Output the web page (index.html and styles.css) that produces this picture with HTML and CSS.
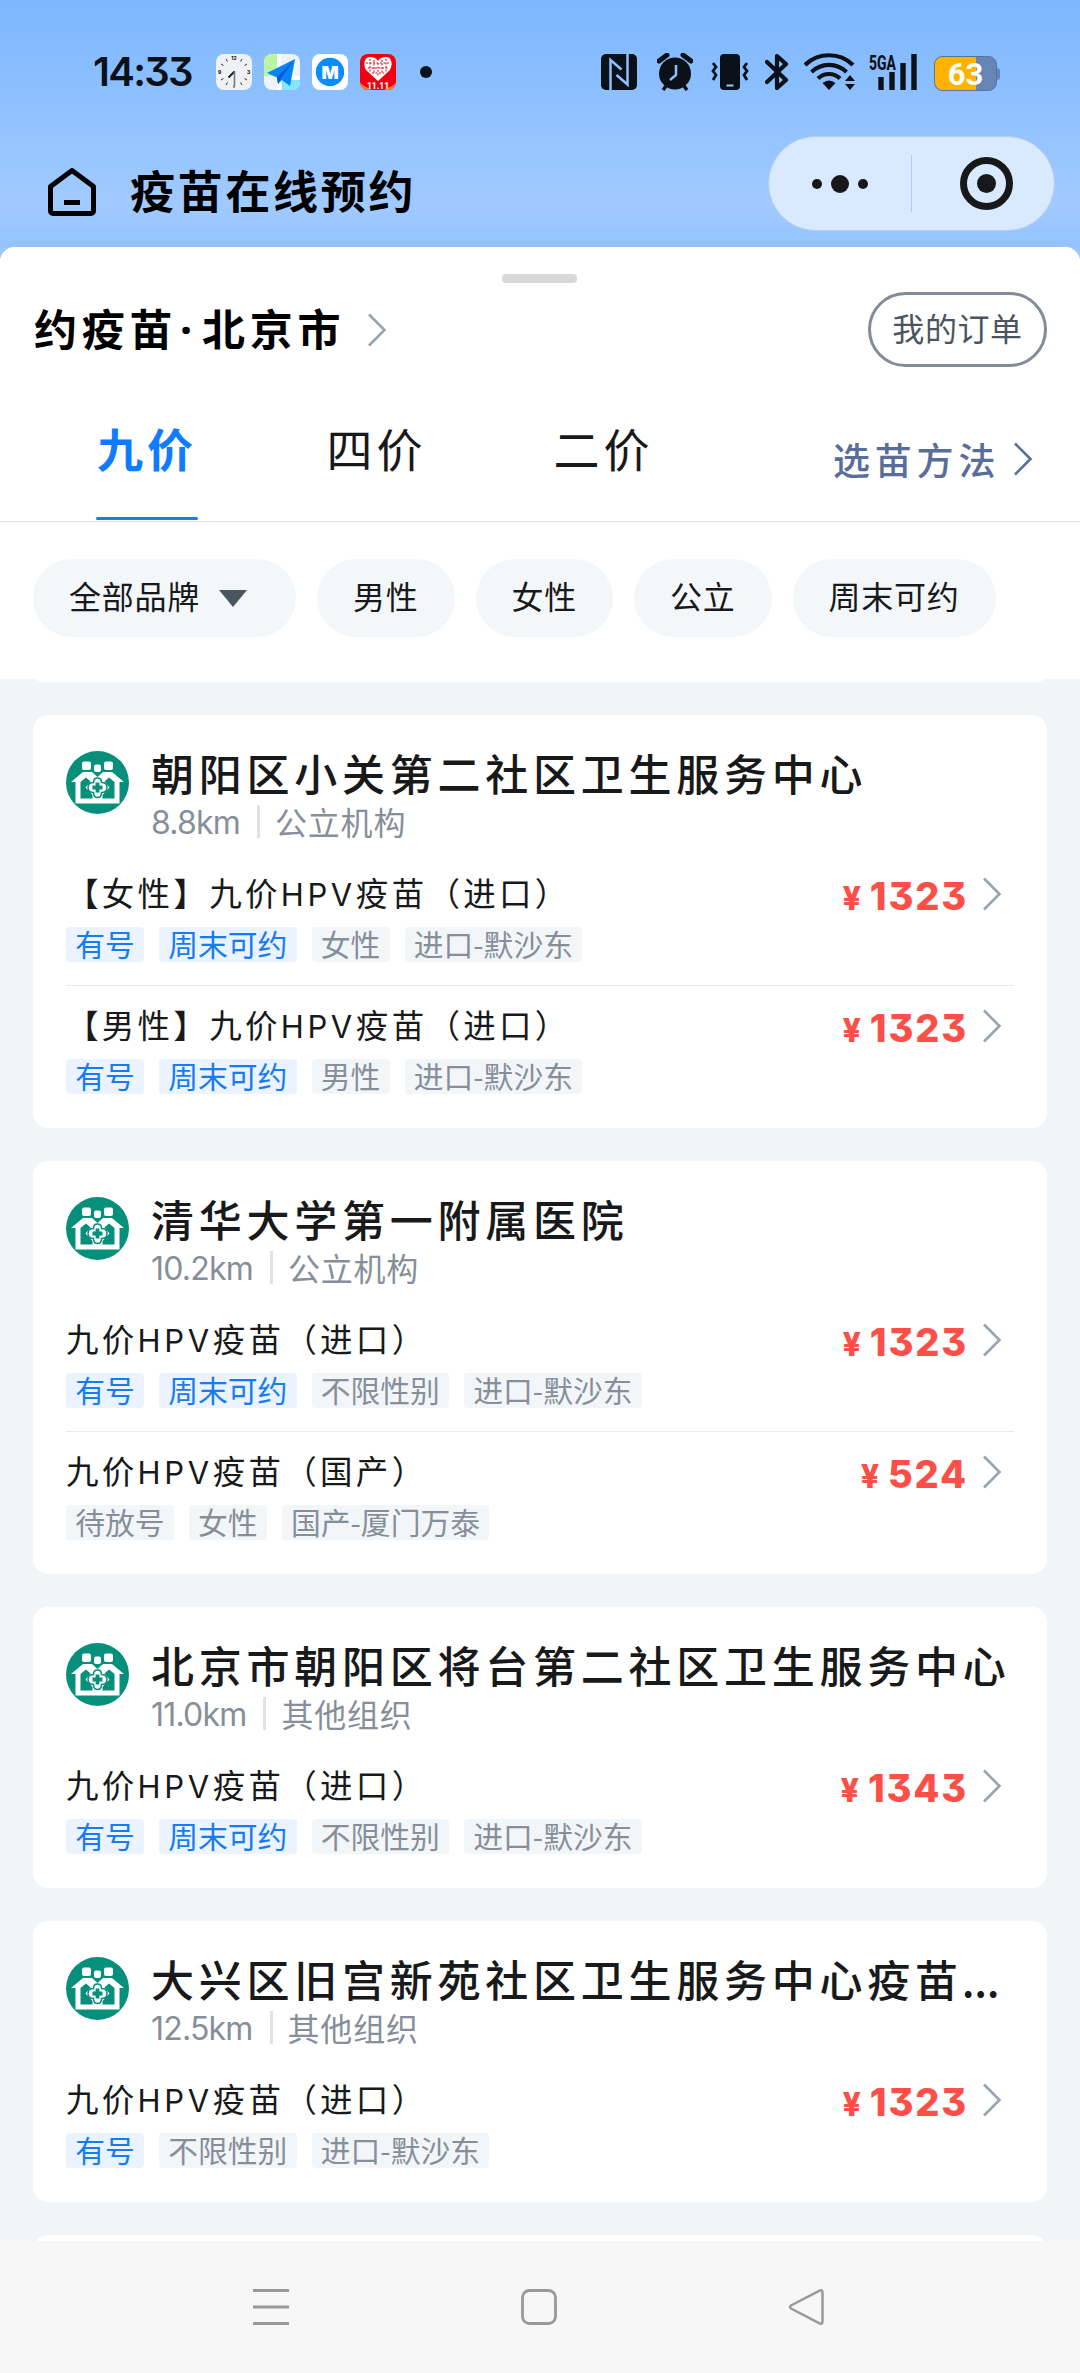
FILE: index.html
```html
<!DOCTYPE html>
<html lang="zh-CN">
<head>
    <meta charset="UTF-8">
    <meta name="viewport" content="width=device-width, initial-scale=1.0">
    <title>疫苗在线预约</title>
    <link rel="stylesheet" href="styles.css">
</head>
<body>
    <!-- Shared icons -->
    <svg width="0" height="0" class="sprite">
        <symbol id="logo" viewBox="0 0 63 63">
            <circle cx="31.5" cy="31.5" r="31.5" fill="#068f7b"/>
            <g fill="#fff">
                <rect x="16" y="10.500" width="9" height="8.500" rx="2"/>
                <rect x="28" y="13.500" width="7" height="7.500" rx="2"/>
                <rect x="38" y="10.500" width="9" height="8.500" rx="2"/>
                <path d="M5 31L17 21h9l5.500 5 5.500-5h9L58 31h-4.500v21.500h-44V31z"/>
            </g>
            <path d="M14.500 47.500V31l5.500-4.500 4.500 4-5 6 7 7.500v3.500zM48.500 47.500V31L43 26.500l-4.500 4 5 6-7 7.500v3.500z" fill="#068f7b"/>
            <path d="M31.500 27c3 0 4 2 4 4.500 3 0 5.500 1.500 5.500 5s-2.500 5-5.500 5c0 3-1 5-4 5s-4-2-4-5c-3 0-5.500-1.500-5.500-5s2.500-5 5.500-5c0-2.500 1-4.500 4-4.500z" fill="#fff" stroke="#068f7b" stroke-width="1.500"/>
            <path d="M31.500 31.500v10M26.500 36.500h10" stroke="#068f7b" stroke-width="3.800"/>
        </symbol>
        <symbol id="arrow" viewBox="0 0 20 34">
            <path d="M2 1.500L17.500 17 2 32.500" fill="none" stroke="currentColor" stroke-width="2.600"/>
        </symbol>
    </svg>

    <header class="top">
        <div class="status-bar">
            <span class="time">14:33</span>
            <div class="app-icons">
                <svg viewBox="0 0 36 36">
                    <rect width="36" height="36" rx="8" fill="#eff1f4"/>
                    <g stroke="#333" stroke-width="1"><path d="M26 5l-1.500 2.500M31 10l-2.500 1.500M31 26l-2.500-1.500M26 31l-1.500-2.500M10 31l1.500-2.500M5 26l2.500-1.500M5 10l2.500 1.500M10 5l1.500 2.500M18 31v3"/></g>
                    <path d="M18.500 17.500L12.500 23.500" stroke="#222" stroke-width="2"/>
                    <path d="M18.500 17v15" stroke="#67748c" stroke-width="1.500"/>
                    <text x="18" y="6" class="dial">12</text><text x="32.500" y="20" class="dial">3</text><text x="3.500" y="20" class="dial">9</text>
                </svg>
                <svg viewBox="0 0 36 36">
                    <rect width="36" height="36" rx="8" fill="#ecf4f5"/>
                    <path d="M8 0h5v22H0V8a8 8 0 0 1 8-8z" fill="#bdf4a4"/>
                    <path d="M18 26h18v2a8 8 0 0 1-8 8H18z" fill="#83e6ff"/>
                    <path d="M13 0h4v36h-4zM17 22h19v4H17z" fill="#fff"/>
                    <path d="M31 5L3 19l10 4.500 1 6.500 4-4 8 6z" fill="#0a83f7"/>
                    <path d="M31 5L13 23.500l1 6.500 3-6z" fill="#0757d8"/>
                </svg>
                <svg viewBox="0 0 36 36">
                    <rect width="36" height="36" rx="8" fill="#fff"/>
                    <circle cx="18" cy="18" r="14.200" fill="#0a8cfb"/>
                    <text x="18" y="24.500" class="app-m">M</text>
                </svg>
                <svg viewBox="0 0 36 36">
                    <rect width="36" height="36" rx="8" fill="#f20012"/>
                    <path d="M0 28c3 5 8 5 12 8H8a8 8 0 0 1-8-8zM36 28c-3 5-8 5-12 8h4a8 8 0 0 0 8-8z" fill="#ff7a30"/>
                    <path d="M18 27L6 16C3 11 4 3 10 3c4 0 6 1 8 4 2-3 4-4 8-4 6 0 7 8 4 13z" fill="#fff"/>
                    <path d="M6 9h24M8 14h20M12 19h12M10 5v13M14 6v14M18 9v14M22 6v14M26 5v13" stroke="#f20012" stroke-width="1" stroke-dasharray="2 1.500"/>
                    <text x="18" y="34.500" class="sale">11.11</text>
                </svg>
            </div>
            <span class="more-dot"></span>
            <div class="sys-icons">
                <svg class="nfc" width="36" height="36" viewBox="0 0 36 36">
                    <rect width="36" height="36" rx="5" fill="#0b1118"/>
                    <path d="M9.500 36V6l11 9.500M26.500 0v30.500l-11-9.500" fill="none" stroke="#8fc0ff" stroke-width="2.500"/>
                </svg>
                <svg class="alarm" width="36" height="38" viewBox="0 0 36 38">
                    <circle cx="18" cy="20.500" r="16" fill="#0b1118"/>
                    <path d="M2 8l8-6M34 8l-8-6" stroke="#0b1118" stroke-width="5" stroke-linecap="round"/>
                    <path d="M9 33l-3 4M27 33l3 4" stroke="#0b1118" stroke-width="3.500"/>
                    <path d="M19 12v10l-6 5" fill="none" stroke="#8dbfff" stroke-width="2.500"/>
                </svg>
                <svg class="vibrate" width="38" height="36" viewBox="0 0 38 36">
                    <rect x="9" width="20" height="36" rx="4" fill="#0b1118"/>
                    <path d="M15.500 31.500h7" stroke="#9cc6ff" stroke-width="2"/>
                    <path d="M2 9l3 4-3 4 3 4-3 5M36 9l-3 4 3 4-3 4 3 5" fill="none" stroke="#0b1118" stroke-width="2.800"/>
                </svg>
                <svg class="bluetooth" width="24" height="38" viewBox="0 0 24 38">
                    <path d="M2 9l19 18-9 8V3l9 8L2 29" fill="none" stroke="#0b1118" stroke-width="4.200" stroke-linejoin="round" stroke-linecap="round"/>
                </svg>
                <svg class="wifi" width="52" height="38" viewBox="0 0 52 38">
                    <g fill="none" stroke="#0b1118" stroke-width="4.200">
                        <path d="M1 12c13-13 35-13 48 0"/>
                        <path d="M7.500 19c10-9.500 25-9.500 35 0"/>
                        <path d="M14 25.500c6-6 16-6 22 0"/>
                    </g>
                    <path d="M18.500 30q6.500-5 13 0L25 37zM41 28l5-6 5 6zM41 31l5 6 5-6z" fill="#0b1118"/>
                </svg>
                <svg class="signal" width="48" height="38" viewBox="0 0 48 38">
                    <text x="0" y="16.500" textLength="27" lengthAdjust="spacingAndGlyphs" class="net">5GA</text>
                    <path d="M12 37V24M23 37V19M34 37V10M45 37V1" stroke="#0b1118" stroke-width="5.400"/>
                </svg>
                <svg class="battery" width="67" height="35" viewBox="0 0 67 35">
                    <rect x=".5" y=".5" width="62" height="34" rx="8" fill="#6585b5" stroke="#54759f"/>
                    <path d="M63 12q3 0 3 3v6q0 3-3 3z" fill="#6585b5"/>
                    <path d="M8.500 1H42v33H8.500A7.500 7.500 0 0 1 1 26.500v-18A7.500 7.500 0 0 1 8.500 1z" fill="#ffb300"/>
                    <text x="31.500" y="28.500" class="level">63</text>
                </svg>
            </div>
        </div>
        <div class="nav-bar">
            <svg class="home" viewBox="0 0 48 48">
                <path d="M2.500 18.500L24 2.500l21.500 16V43a2.500 2.500 0 0 1-2.500 2.500H5A2.500 2.500 0 0 1 2.500 43z" fill="none" stroke="#000" stroke-width="5" stroke-linejoin="round"/>
                <path d="M16 34.500h16" stroke="#000" stroke-width="5"/>
            </svg>
            <h1 class="nav-title">疫苗在线预约</h1>
            <div class="capsule">
                <div class="dots"><i></i><i class="big"></i><i></i></div>
                <span class="capsule-line"></span>
                <div class="target"><i></i></div>
            </div>
        </div>
    </header>

    <main class="sheet">
        <section class="panel">
            <div class="handle"></div>
            <div class="city-row">
                <h2 class="city">约疫苗<span class="mid-dot">·</span>北京市</h2>
                <svg class="arrow city-arrow"><use href="#arrow"/></svg>
                <button class="orders">我的订单</button>
            </div>
            <nav class="tabs">
                <a class="tab active">九价</a>
                <a class="tab">四价</a>
                <a class="tab">二价</a>
                <a class="guide">选苗方法<svg class="arrow"><use href="#arrow"/></svg></a>
            </nav>
            <div class="filters">
                <span class="chip">全部品牌<i class="caret"></i></span>
                <span class="chip">男性</span>
                <span class="chip">女性</span>
                <span class="chip">公立</span>
                <span class="chip">周末可约</span>
            </div>
        </section>

        <section class="list">
            <div class="card card-prev"></div>

            <article class="card">
                <div class="card-head">
                    <svg class="logo"><use href="#logo"/></svg>
                    <div>
                        <h3 class="name">朝阳区小关第二社区卫生服务中心</h3>
                        <p class="meta"><span>8.8km</span><i></i>公立机构</p>
                    </div>
                </div>
                <div class="item">
                    <div class="item-row">
                        <span class="vaccine">【女性】九价<b>HPV</b>疫苗（进口）</span>
                        <span class="price"><small>¥</small>1323</span>
                        <svg class="arrow"><use href="#arrow"/></svg>
                    </div>
                    <div class="tags"><span class="tag blue">有号</span><span class="tag blue">周末可约</span><span class="tag">女性</span><span class="tag">进口-默沙东</span></div>
                </div>
                <div class="item">
                    <div class="item-row">
                        <span class="vaccine">【男性】九价<b>HPV</b>疫苗（进口）</span>
                        <span class="price"><small>¥</small>1323</span>
                        <svg class="arrow"><use href="#arrow"/></svg>
                    </div>
                    <div class="tags"><span class="tag blue">有号</span><span class="tag blue">周末可约</span><span class="tag">男性</span><span class="tag">进口-默沙东</span></div>
                </div>
            </article>

            <article class="card">
                <div class="card-head">
                    <svg class="logo"><use href="#logo"/></svg>
                    <div>
                        <h3 class="name">清华大学第一附属医院</h3>
                        <p class="meta"><span>10.2km</span><i></i>公立机构</p>
                    </div>
                </div>
                <div class="item">
                    <div class="item-row">
                        <span class="vaccine">九价<b>HPV</b>疫苗（进口）</span>
                        <span class="price"><small>¥</small>1323</span>
                        <svg class="arrow"><use href="#arrow"/></svg>
                    </div>
                    <div class="tags"><span class="tag blue">有号</span><span class="tag blue">周末可约</span><span class="tag">不限性别</span><span class="tag">进口-默沙东</span></div>
                </div>
                <div class="item">
                    <div class="item-row">
                        <span class="vaccine">九价<b>HPV</b>疫苗（国产）</span>
                        <span class="price"><small>¥</small>524</span>
                        <svg class="arrow"><use href="#arrow"/></svg>
                    </div>
                    <div class="tags"><span class="tag">待放号</span><span class="tag">女性</span><span class="tag">国产-厦门万泰</span></div>
                </div>
            </article>

            <article class="card">
                <div class="card-head">
                    <svg class="logo"><use href="#logo"/></svg>
                    <div>
                        <h3 class="name">北京市朝阳区将台第二社区卫生服务中心</h3>
                        <p class="meta"><span>11.0km</span><i></i>其他组织</p>
                    </div>
                </div>
                <div class="item">
                    <div class="item-row">
                        <span class="vaccine">九价<b>HPV</b>疫苗（进口）</span>
                        <span class="price"><small>¥</small>1343</span>
                        <svg class="arrow"><use href="#arrow"/></svg>
                    </div>
                    <div class="tags"><span class="tag blue">有号</span><span class="tag blue">周末可约</span><span class="tag">不限性别</span><span class="tag">进口-默沙东</span></div>
                </div>
            </article>

            <article class="card">
                <div class="card-head">
                    <svg class="logo"><use href="#logo"/></svg>
                    <div>
                        <h3 class="name">大兴区旧宫新苑社区卫生服务中心疫苗<span class="ellipsis">...</span></h3>
                        <p class="meta"><span>12.5km</span><i></i>其他组织</p>
                    </div>
                </div>
                <div class="item">
                    <div class="item-row">
                        <span class="vaccine">九价<b>HPV</b>疫苗（进口）</span>
                        <span class="price"><small>¥</small>1323</span>
                        <svg class="arrow"><use href="#arrow"/></svg>
                    </div>
                    <div class="tags"><span class="tag blue">有号</span><span class="tag">不限性别</span><span class="tag">进口-默沙东</span></div>
                </div>
            </article>

            <article class="card card-next"></article>
        </section>
    </main>

    <footer class="sys-nav">
        <svg viewBox="0 0 36 36"><path d="M0 1.500h36M0 18h36M0 34.500h36" stroke="#999" stroke-width="3"/></svg>
        <svg viewBox="0 0 36 36"><rect x="1.500" y="1.500" width="33" height="33" rx="7" fill="none" stroke="#999" stroke-width="2.800"/></svg>
        <svg viewBox="0 0 36 36"><path d="M32 1.500q2.500-1 2.500 2v29q0 3-2.500 2L3 19.500q-2-1.500 0-3z" fill="none" stroke="#999" stroke-width="2.500"/></svg>
    </footer>
</body>
</html>
```

FILE: styles.css
```css
* {
    box-sizing: border-box;
}

body {
    margin: 0;
    width: 1080px;
    height: 2373px;
    overflow: hidden;
    display: flex;
    flex-direction: column;
    font-family: "Noto Sans CJK SC", sans-serif;
    color: #17191b;
    background-color: #f1f5f8;
}

h1, h2, h3, p {
    margin: 0;
}

svg {
    display: block;
    flex: none;
}

.sprite {
    position: absolute;
}

/* --- Blue header --- */
.top {
    height: 272px;
    flex: none;
    margin-bottom: -25px;
    background: linear-gradient(#80b8ff 0, #81b9ff 25px, #a1caff 205px, #95c2ff 246px, #a8ceff 260px);
}

.status-bar {
    height: 144px;
    padding: 0 79px 0 93px;
    display: flex;
    align-items: center;
}

.time {
    width: 123px;
    font: 600 40px/40px Inter, sans-serif;
    font-feature-settings: "cv09";
    letter-spacing: -1.7px;
    color: #0b1118;
}

.app-icons {
    display: flex;
    gap: 12px;
}

.app-icons svg {
    width: 36px;
    height: 36px;
}

.dial {
    font: 700 5px Inter, sans-serif;
    text-anchor: middle;
}

.app-m {
    font: 900 18px Inter, sans-serif;
    text-anchor: middle;
    fill: #fff;
}

.sale {
    font: 800 8.5px Roboto, sans-serif;
    text-anchor: middle;
    fill: #fff;
}

.more-dot {
    width: 12px;
    height: 12px;
    margin-left: 24px;
    border-radius: 50%;
    background: #0b1118;
}

.sys-icons {
    margin-left: auto;
    display: flex;
    align-items: center;
}

.alarm {
    margin-left: 20px;
}

.vibrate {
    margin-left: 18px;
}

.bluetooth {
    margin-left: 16px;
}

.wifi {
    margin-left: 15px;
}

.signal {
    margin-left: 13px;
    overflow: visible;
}

.battery {
    margin: 2px 0 0 17px;
}

.net {
    font: 800 21px Roboto, sans-serif;
    fill: #0b1118;
}

.level {
    font: 700 31px Roboto, sans-serif;
    text-anchor: middle;
    fill: #fff;
}

.nav-bar {
    height: 103px;
    padding: 0 25px 7px 48px;
    display: flex;
    align-items: center;
}

.home {
    width: 48px;
    height: 48px;
}

.nav-title {
    margin: -5px 0 0 34px;
    font-size: 45px;
    line-height: 60px;
    letter-spacing: 2.7px;
    color: #000;
}

.capsule {
    width: 287px;
    height: 95px;
    margin: -17px 0 0 auto;
    display: flex;
    align-items: center;
    border-radius: 48px;
    border: 1px solid #b3cdec;
    background: #d9e9ff;
}

.dots {
    width: 142px;
    display: flex;
    align-items: center;
    justify-content: center;
    gap: 9px;
}

.dots i {
    width: 10px;
    height: 10px;
    border-radius: 50%;
    background: #16181a;
}

.dots .big {
    width: 18px;
    height: 18px;
}

.capsule-line {
    width: 1px;
    height: 57px;
    background: #b9cbe2;
}

.target {
    width: 53px;
    height: 53px;
    margin-left: 48px;
    border: 7px solid #16181a;
    border-radius: 50%;
    display: flex;
    align-items: center;
    justify-content: center;
}

.target i {
    width: 19px;
    height: 19px;
    border-radius: 50%;
    background: #16181a;
}

/* --- Filter panel --- */
.sheet {
    flex: 1;
    min-height: 0;
    overflow: hidden;
    border-radius: 15px 15px 0 0;
    background: #f1f5f8;
}

.panel {
    height: 432px;
    padding-top: 27px;
    background: #fff;
}

.handle {
    width: 75px;
    height: 9px;
    margin-left: 502px;
    border-radius: 4px;
    background: #d8d8d8;
}

.city-row {
    height: 93px;
    padding: 0 33px 0 34px;
    display: flex;
    align-items: center;
}

.city {
    margin-top: -3px;
    font-size: 43px;
    line-height: 60px;
    letter-spacing: 4.7px;
    color: #000;
}

.mid-dot {
    display: inline-block;
    width: 25px;
    text-indent: 3px;
    letter-spacing: 0;
    font-family: "Noto Sans", sans-serif;
}

.arrow {
    width: 20px;
    height: 34px;
    color: #98a4b1;
}

.city-arrow {
    margin-left: 22px;
}

.orders {
    width: 179px;
    height: 75px;
    margin-left: auto;
    padding: 0 0 6px;
    border: 3px solid #828c96;
    border-radius: 38px;
    background: none;
    font: 400 32px "Noto Sans CJK SC", sans-serif;
    letter-spacing: .6px;
    color: #4b5560;
}

.tabs {
    height: 146px;
    padding-left: 33px;
    display: flex;
    border-bottom: 1px solid #dae3ea;
}

.tab {
    width: 227px;
    padding: 41px 0 0 6px;
    font-size: 46px;
    line-height: 60px;
    letter-spacing: 4px;
    text-align: center;
}

.tab.active {
    padding-left: 1px;
    font-weight: 700;
    color: #0f7bff;
}

.tab.active::after {
    content: "";
    display: block;
    width: 102px;
    height: 3px;
    margin: 40px 0 0 62px;
    border-radius: 2px;
    background: #1f7ce0;
}

.guide {
    height: 60px;
    margin: 53px 0 0 119px;
    display: flex;
    align-items: center;
    font-size: 37px;
    font-weight: 500;
    line-height: 60px;
    letter-spacing: 4.8px;
    color: #586d98;
}

.guide .arrow {
    margin-left: 13px;
    color: #586d98;
}

.filters {
    padding: 37px 33px 0;
    display: flex;
    gap: 21px;
}

.chip {
    height: 78px;
    padding: 0 36px 6px;
    display: flex;
    align-items: center;
    border-radius: 39px;
    background: #f3f7fa;
    font-size: 32px;
    line-height: 70px;
    letter-spacing: .75px;
}

.caret {
    margin: 6px 13px 0 19px;
    border: 14px solid transparent;
    border-top: 17px solid #4b5560;
    border-bottom: 0;
}

/* --- Clinic list --- */
.list {
    padding: 0 33px;
    display: flex;
    flex-direction: column;
    gap: 33px;
}

.card {
    padding: 36px 33px 33px;
    border-radius: 15px;
    background: #fff;
}

.card-prev {
    height: 18px;
    padding: 0;
    margin-top: -15px;
}

.card-next {
    height: 60px;
}

.card-head {
    height: 98px;
    display: flex;
    gap: 22px;
}

.logo {
    width: 63px;
    height: 63px;
}

.name {
    height: 47px;
    font-size: 43px;
    font-weight: 500;
    line-height: 43px;
    letter-spacing: 4.75px;
    white-space: nowrap;
}

.ellipsis {
    margin-left: -1px;
    letter-spacing: -.3px;
}

.meta {
    height: 46px;
    display: flex;
    align-items: center;
    font-size: 32px;
    line-height: 44px;
    letter-spacing: .8px;
    color: #868f99;
}

.meta span {
    margin-top: 3px;
    font-family: Inter, sans-serif;
    letter-spacing: -.8px;
}

.meta i {
    width: 3px;
    height: 33px;
    margin: 0 15px 0 17px;
    background: #dfe3e8;
}

.item {
    height: 114px;
    padding-top: 22px;
}

.item:not(:last-child) {
    height: 137px;
    border-bottom: 1px solid #e6ebef;
}

.item + .item {
    height: 109px;
    padding-top: 17px;
}

.item-row {
    height: 46px;
    display: flex;
    align-items: center;
}

.vaccine {
    margin-top: -1px;
    font-size: 32.5px;
    line-height: 46px;
    letter-spacing: 3.3px;
    white-space: nowrap;
}

.vaccine b {
    font-family: Inter, sans-serif;
    font-size: 31px;
    font-weight: 400;
    letter-spacing: 3.6px;
}

.price {
    margin: 6px 0 0 auto;
    font: 800 38px/46px Inter, sans-serif;
    font-feature-settings: "cv09";
    letter-spacing: 1.8px;
    color: #fc4f48;
}

.price small {
    margin-right: 7px;
    font-size: 32px;
}

.item-row .arrow {
    margin: 0 12px 0 14px;
}

.tags {
    margin-top: 10px;
    display: flex;
    gap: 15px;
}

.tag {
    height: 35px;
    padding: 0 9.2px;
    border-radius: 4px;
    background: #f3f6f9;
    font-size: 29.8px;
    line-height: 32px;
    color: #868f99;
}

.tag.blue {
    background: #eaf3ff;
    color: #177cf2;
}

/* --- Android navigation keys --- */
.sys-nav {
    height: 132px;
    flex: none;
    padding: 48px 256px 0 253px;
    display: flex;
    justify-content: space-between;
    background: #f7f7f7;
}

.sys-nav svg {
    width: 36px;
    height: 36px;
}
```
